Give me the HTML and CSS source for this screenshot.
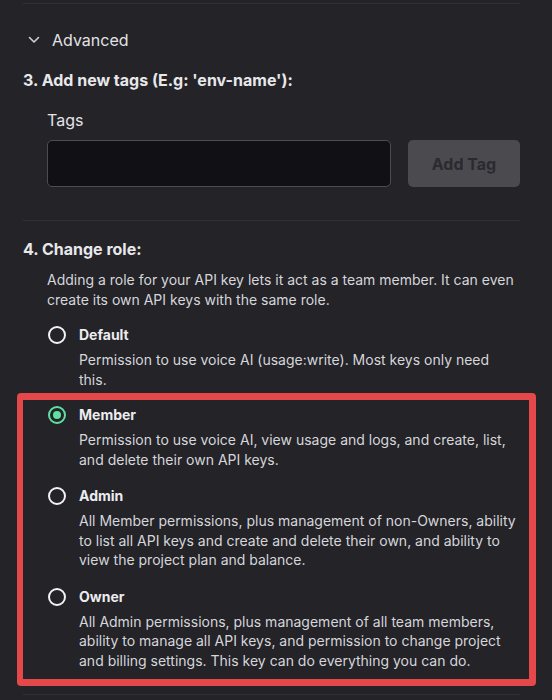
FILE: index.html
```html
<!DOCTYPE html>
<html lang="en">
<head>
<meta charset="utf-8">
<title>API key settings</title>
<link rel="stylesheet" href="styles.css">
</head>
<body>
<div class="page">
  <hr class="rule">
  <button class="disclosure" type="button">
    <svg class="chevron" width="12" height="8" viewBox="0 0 12 8" aria-hidden="true"><path d="M1.5 1.5 L6 6 L10.5 1.5" fill="none" stroke="currentColor" stroke-width="1.6" stroke-linecap="round" stroke-linejoin="round"/></svg>
    <span>Advanced</span>
  </button>

  <section class="step">
    <h3 class="step-title">3. Add new tags (E.g: 'env-name'):</h3>
    <div class="field">
      <label class="field-label" for="tags">Tags</label>
      <div class="tag-row">
        <input id="tags" class="tag-input" type="text">
        <button class="tag-btn" type="button">Add Tag</button>
      </div>
    </div>
  </section>

  <hr class="rule">

  <section class="step">
    <h3 class="step-title">4. Change role:</h3>
    <p class="hint">Adding a role for your API key lets it act as a team member. It can even create its own API keys with the same role.</p>
    <div class="roles">
      <label class="role">
        <span class="radio"></span>
        <span class="role-body">
          <span class="role-name">Default</span>
          <span class="role-desc">Permission to use voice AI (usage:write). Most keys only need this.</span>
        </span>
      </label>
      <div class="highlight">
        <label class="role">
          <span class="radio is-checked"></span>
          <span class="role-body">
            <span class="role-name">Member</span>
            <span class="role-desc">Permission to use voice AI, view usage and logs, and create, list, and delete their own API keys.</span>
          </span>
        </label>
        <label class="role">
          <span class="radio"></span>
          <span class="role-body">
            <span class="role-name">Admin</span>
            <span class="role-desc">All Member permissions, plus management of non-Owners, ability to list all API keys and create and delete their own, and ability to view the project plan and balance.</span>
          </span>
        </label>
        <label class="role">
          <span class="radio"></span>
          <span class="role-body">
            <span class="role-name">Owner</span>
            <span class="role-desc">All Admin permissions, plus management of all team members, ability to manage all API keys, and permission to change project and billing settings. This key can do everything you can do.</span>
          </span>
        </label>
      </div>
    </div>
  </section>

  <hr class="rule rule-bottom">
</div>
</body>
</html>
```

FILE: styles.css
```css
* { box-sizing: border-box; }

html, body {
  margin: 0;
  background: #232328;
}

body {
  font-family: Inter, "Noto Sans", sans-serif;
  color: #e6e6e9;
  -webkit-font-smoothing: antialiased;
}

.page {
  padding: 3px 32px 0 23px;
  width: 552px;
}

.rule {
  border: 0;
  border-top: 1px solid #303036;
  margin: 0;
  height: 0;
}

.disclosure {
  display: flex;
  align-items: center;
  gap: 12px;
  margin: 24px 0 0 5px;
  padding: 0;
  height: 24px;
  background: none;
  border: 0;
  color: #e2e2e5;
  font-family: inherit;
  font-size: 16px;
  line-height: 24px;
}

.chevron { color: #d0d0d4; }

.step-title {
  margin: 17px 0 0;
  font-size: 16px;
  line-height: 22px;
  font-weight: 700;
  color: #e8e8eb;
}

.field { padding-left: 24px; margin-top: 18px; }

.field-label {
  display: block;
  font-size: 16px;
  line-height: 22px;
  color: #e4e4e7;
}

.tag-row {
  display: flex;
  gap: 17px;
  margin-top: 9px;
  margin-bottom: 33px;
}

.tag-input {
  width: 344px;
  height: 47px;
  background: #111115;
  border: 1px solid #4c4c52;
  border-radius: 5px;
  color: #e6e6e9;
  padding: 0 12px;
  font-family: inherit;
  font-size: 15px;
}

.tag-btn {
  flex: 1;
  height: 47px;
  background: #4b4b4f;
  border: 0;
  border-radius: 5px;
  color: #2a2a2f;
  font-family: inherit;
  font-size: 16px;
  font-weight: 700;
}

.hint {
  margin: 10px -10px 0 24px;
  font-size: 14px;
  line-height: 19.5px;
  color: #d6d6da;
}

.roles {
  margin-top: 16px;
  padding-left: 25px;
  padding-bottom: 8px;
}

.role {
  display: flex;
  gap: 13px;
  align-items: flex-start;
}

.radio {
  flex: none;
  width: 18px;
  height: 18px;
  margin-top: 1px;
  border: 2px solid #f2f2f4;
  border-radius: 50%;
  display: flex;
  align-items: center;
  justify-content: center;
}

.radio.is-checked {
  border-color: #5fe0a2;
}

.radio.is-checked::after {
  content: "";
  width: 8px;
  height: 8px;
  border-radius: 50%;
  background: #5fe0a2;
}

.role-body {
  display: flex;
  flex-direction: column;
  gap: 5px;
}

.role-name {
  font-size: 14px;
  line-height: 20px;
  font-weight: 700;
  color: #ececef;
}

.role-desc {
  font-size: 14px;
  line-height: 19.5px;
  color: #d6d6da;
}

.highlight {
  margin: 4px -16px 0 -31px;
  border: 7px solid #e5484a;
  border-left-width: 6px;
  border-radius: 4px;
  padding: 5px 7px 9px 25px;
  display: flex;
  flex-direction: column;
  gap: 17px;
}
```
